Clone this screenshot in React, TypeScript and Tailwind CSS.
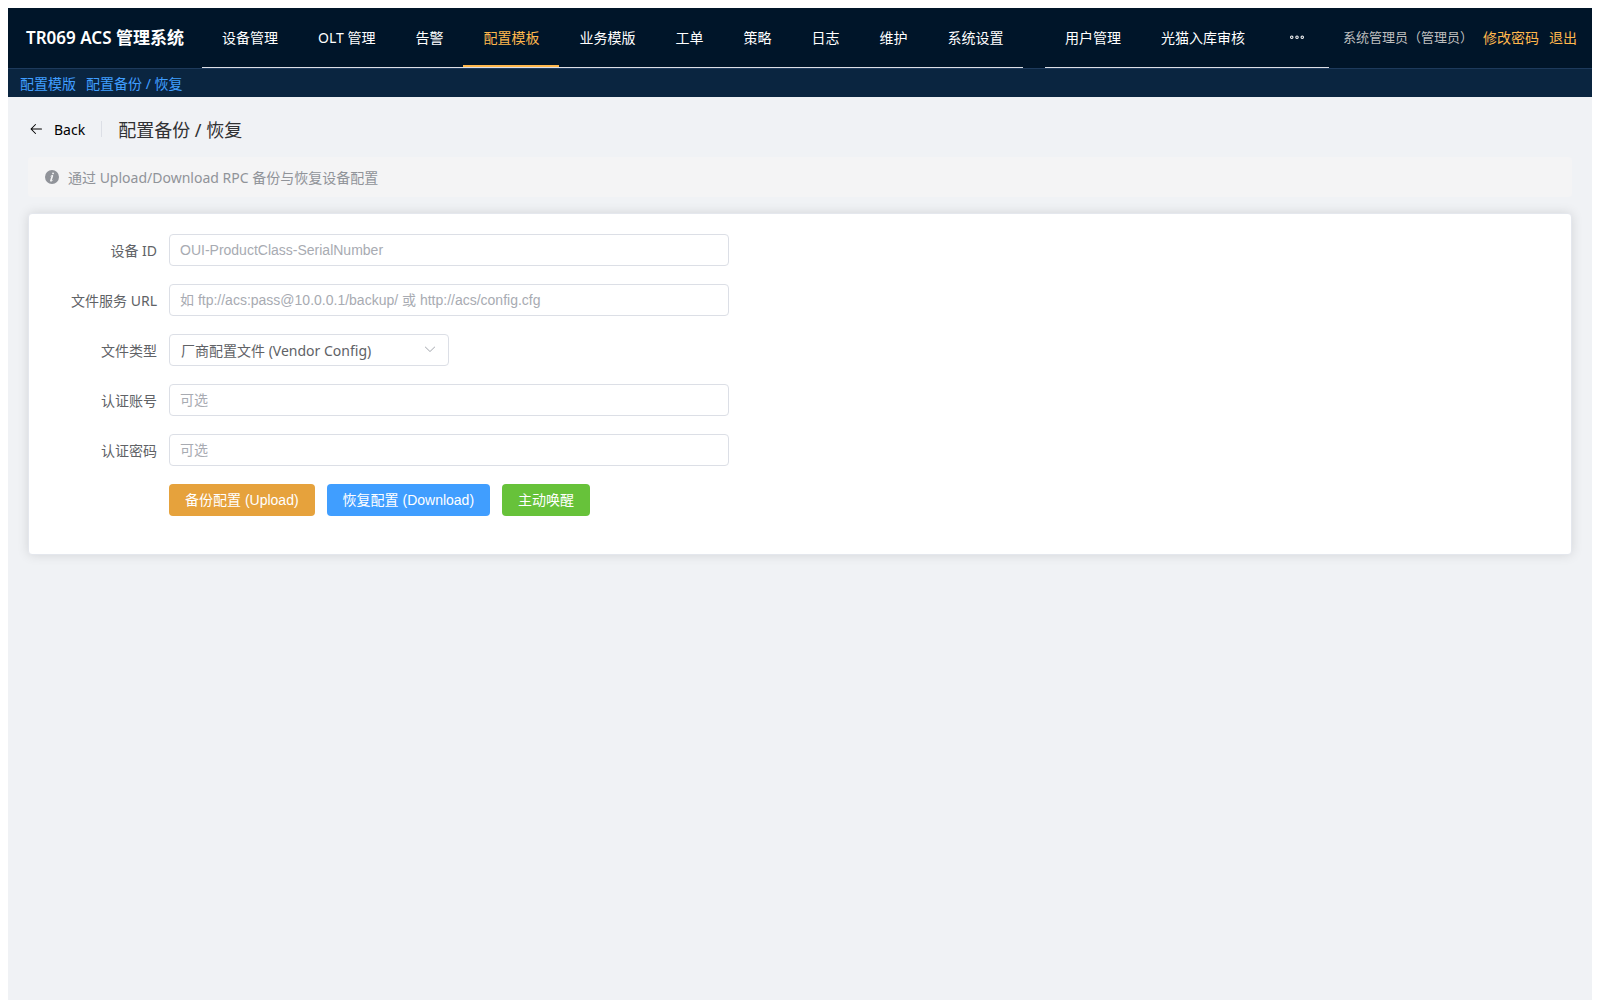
import { useState } from "react";
import type { ReactNode } from "react";

const mainMenu = [
  "设备管理",
  "OLT 管理",
  "告警",
  "配置模板",
  "业务模版",
  "工单",
  "策略",
  "日志",
  "维护",
  "系统设置",
];

const adminMenu = ["用户管理", "光猫入库审核"];

const ARROW_LEFT =
  "M224 480h640a32 32 0 1 1 0 64H224a32 32 0 0 1 0-64m13.248 32 265.408 265.344a32 32 0 0 1-45.312 45.312l-288-288a32 32 0 0 1 0-45.312l288-288a32 32 0 1 1 45.312 45.312z";
const ARROW_DOWN =
  "M831.872 340.864 512 652.672 192.128 340.864a30.592 30.592 0 0 0-42.752 0 29.12 29.12 0 0 0 0 41.6L489.664 714.24a32 32 0 0 0 44.672 0l340.288-331.712a29.12 29.12 0 0 0 0-41.728 30.592 30.592 0 0 0-42.752 0z";
const INFO =
  "M512 64a448 448 0 1 1 0 896.064A448 448 0 0 1 512 64m67.2 275.072c33.28 0 60.288-23.104 60.288-57.344s-27.072-57.344-60.288-57.344c-33.28 0-60.16 23.104-60.16 57.344s26.88 57.344 60.16 57.344M590.912 699.2c0-6.848 2.368-24.64 1.024-34.752l-52.608 60.544c-10.88 11.456-24.512 19.392-30.912 17.28a12.992 12.992 0 0 1-8.256-14.72l87.68-276.992c7.168-35.136-12.544-67.2-54.336-71.296-44.096 0-108.992 44.736-148.48 101.504 0 6.784-1.28 23.68.064 33.792l52.544-60.608c10.88-11.328 23.552-19.328 29.952-17.152a12.8 12.8 0 0 1 7.808 16.128L388.48 728.576c-10.048 32.256 8.96 63.872 55.04 71.04 67.84 0 107.904-43.648 147.456-100.416z";
const MORE =
  "M176 416a112 112 0 1 0 0 224 112 112 0 0 0 0-224m0 64a48 48 0 1 1 0 96 48 48 0 0 1 0-96m336-64a112 112 0 1 1 0 224 112 112 0 0 1 0-224m0 64a48 48 0 1 0 0 96 48 48 0 0 0 0-96m336-64a112 112 0 1 1 0 224 112 112 0 0 1 0-224m0 64a48 48 0 1 0 0 96 48 48 0 0 0 0-96";

const Icon = ({ d, className }: { d: string; className: string }) => (
  <svg viewBox="0 0 1024 1024" fill="currentColor" aria-hidden className={className}>
    <path d={d} />
  </svg>
);

const MenuItem = ({ label, active }: { label: string; active?: boolean }) => (
  <a
    href="#"
    aria-current={active ? "page" : undefined}
    className={`flex h-full items-center border-b-2 px-5 pt-0.5 whitespace-nowrap ${active ? "border-[#ffb84d] text-[#ffb84d]" : "border-transparent text-white"}`}
  >
    {label}
  </a>
);

const FormRow = ({
  label,
  htmlFor,
  children,
}: {
  label?: string;
  htmlFor?: string;
  children: ReactNode;
}) => (
  <div className="mb-[18px] flex">
    <div className="flex h-8 w-[120px] shrink-0 items-center justify-end pt-0.5 pr-3 text-[#606266]">
      {label && <label htmlFor={htmlFor}>{label}</label>}
    </div>
    <div className="flex min-w-0 flex-1 gap-3">{children}</div>
  </div>
);

const inputClass =
  "h-8 w-full max-w-[560px] rounded border border-[#dcdfe6] bg-white px-2.5 font-['Liberation_Sans','Noto_Sans_CJK_SC',sans-serif] text-sm text-[#606266] outline-none placeholder:text-[#a8abb2] focus:border-[#409eff]";

const buttonClass =
  "h-8 rounded px-4 font-['Liberation_Sans','Noto_Sans_CJK_SC',sans-serif] text-sm whitespace-nowrap text-white";

const App = () => {
  const [deviceId, setDeviceId] = useState("");
  const [url, setUrl] = useState("");
  const [fileType, setFileType] = useState("config");
  const [username, setUsername] = useState("");
  const [password, setPassword] = useState("");

  return (
    <div className="flex min-h-screen flex-col bg-white px-2 pt-2 font-['Noto_Sans','Noto_Sans_CJK_SC',sans-serif] text-sm">
      {/* Top bar */}
      <header className="flex h-[60px] items-start bg-[#001529] pr-[15px] pl-[18px] whitespace-nowrap">
        <div className="flex h-[60px] w-[176px] shrink-0 items-center text-[17px] font-semibold text-white">
          TR069 ACS 管理系统
        </div>
        <nav className="flex h-[60px] border-b border-[#dcdfe6]">
          {mainMenu.map((label) => (
            <MenuItem key={label} label={label} active={label === "配置模板"} />
          ))}
        </nav>
        <nav className="ml-auto flex h-[60px] border-b border-[#dcdfe6]">
          {adminMenu.map((label) => (
            <MenuItem key={label} label={label} />
          ))}
          <button type="button" aria-label="更多" className="w-16 px-6 pb-0.5 text-white">
            <Icon d={MORE} className="h-4 w-4" />
          </button>
        </nav>
        <div className="ml-3.5 flex h-[60px] items-center">
          <span className="mr-2.5 pb-0.5 text-[13px] text-[#bfbfbf]">系统管理员（管理员）</span>
          <a href="#" className="mr-2.5 text-[#ffb84d]">
            修改密码
          </a>
          <a href="#" className="text-[#ffb84d]">
            退出
          </a>
        </div>
      </header>

      {/* Breadcrumb strip */}
      <nav className="flex h-[29px] items-center gap-2.5 border-t border-[#1d3a5c] bg-[#0a2540] px-3 pt-0.5 text-[#409eff]">
        <a href="#">配置模版</a>
        <a href="#">配置备份 / 恢复</a>
      </nav>

      <main className="flex-1 bg-[#f0f2f5] p-5">
        <div className="flex h-6 items-center">
          <button type="button" className="flex items-center gap-2.5 text-black">
            <Icon d={ARROW_LEFT} className="h-4 w-4" />
            <span className="pt-0.5">Back</span>
          </button>
          <span className="mx-4 h-4 w-px bg-[#dcdfe6]" />
          <h1 className="pt-0.5 text-lg text-[#303133]">配置备份 / 恢复</h1>
        </div>

        <div
          role="note"
          className="mt-4 flex h-10 items-center gap-2 rounded bg-[#f4f4f5] px-4 text-[#909399]"
        >
          <Icon d={INFO} className="h-4 w-4" />
          <p className="pt-0.5">通过 Upload/Download RPC 备份与恢复设备配置</p>
        </div>

        <form
          onSubmit={(e) => e.preventDefault()}
          className="mt-4 rounded border border-[#e4e7ed] bg-white p-5 shadow-[0_0_12px_rgba(0,0,0,0.12)]"
        >
          <FormRow label="设备 ID" htmlFor="device-id">
            <input
              id="device-id"
              value={deviceId}
              onChange={(e) => setDeviceId(e.target.value)}
              placeholder="OUI-ProductClass-SerialNumber"
              className={inputClass}
            />
          </FormRow>
          <FormRow label="文件服务 URL" htmlFor="file-url">
            <input
              id="file-url"
              value={url}
              onChange={(e) => setUrl(e.target.value)}
              placeholder="如 ftp://acs:pass@10.0.0.1/backup/ 或 http://acs/config.cfg"
              className={inputClass}
            />
          </FormRow>
          <FormRow label="文件类型" htmlFor="file-type">
            <div className="relative w-[280px]">
              <select
                id="file-type"
                value={fileType}
                onChange={(e) => setFileType(e.target.value)}
                className="h-8 w-full appearance-none rounded border border-[#dcdfe6] bg-white px-[11px] pt-0.5 text-[#606266] outline-none"
              >
                <option value="config">厂商配置文件 (Vendor Config)</option>
                <option value="log">厂商日志文件 (Vendor Log)</option>
              </select>
              <Icon
                d={ARROW_DOWN}
                className="pointer-events-none absolute top-2 right-3 h-3.5 w-3.5 text-[#a8abb2]"
              />
            </div>
          </FormRow>
          <FormRow label="认证账号" htmlFor="username">
            <input
              id="username"
              value={username}
              onChange={(e) => setUsername(e.target.value)}
              placeholder="可选"
              className={inputClass}
            />
          </FormRow>
          <FormRow label="认证密码" htmlFor="password">
            <input
              id="password"
              type="password"
              value={password}
              onChange={(e) => setPassword(e.target.value)}
              placeholder="可选"
              className={inputClass}
            />
          </FormRow>
          <FormRow>
            <button type="button" className={`${buttonClass} bg-[#e6a23c]`}>
              备份配置 (Upload)
            </button>
            <button type="button" className={`${buttonClass} bg-[#409eff]`}>
              恢复配置 (Download)
            </button>
            <button type="button" className={`${buttonClass} bg-[#67c23a]`}>
              主动唤醒
            </button>
          </FormRow>
        </form>
      </main>
    </div>
  );
};

export default App;
